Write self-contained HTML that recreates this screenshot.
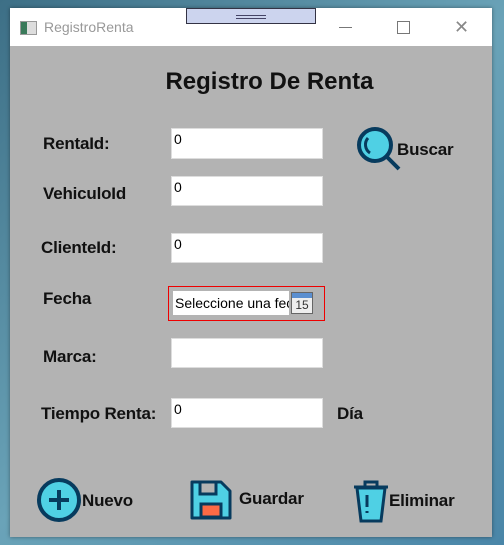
<!DOCTYPE html>
<html><head><style>
body{margin:0;width:504px;height:545px;overflow:hidden;background:linear-gradient(135deg,#3d6f86,#6aa3b8 50%,#4a86a8);font-family:"Liberation Sans",sans-serif;position:relative}
.win{position:absolute;left:10px;top:8px;width:482px;height:529px;background:#b3b3b3;box-shadow:0 0 4px rgba(0,0,0,.4)}
.tb{position:absolute;left:0;top:0;width:482px;height:38px;background:#fff}
.a{position:absolute}
.lbl{position:absolute;font-weight:bold;font-size:17px;color:#111;letter-spacing:-0.2px}
.tx{position:absolute;left:161px;width:152px;background:#fff;border:1px solid #ddd;font-size:14px;padding:2px 2px;box-sizing:border-box}
</style></head><body>
<div class="win">
<div class="tb">
<div class="a" style="left:10px;top:13px;width:15px;height:12px;border:1px solid #999;background:linear-gradient(90deg,#3a7a5a 40%,#ddd 40%)"></div>
<div class="a" style="left:34px;top:11px;font-size:14px;color:#999">RegistroRenta</div>
<div class="a" style="left:176px;top:0;width:128px;height:14px;background:#ccd4ee;border:1px solid #334"><div class="a" style="left:49px;top:6px;width:30px;height:2px;border-top:1px solid #446;border-bottom:1px solid #446"></div></div>
<div class="a" style="left:329px;top:19px;width:13px;height:1px;background:#777"></div>
<div class="a" style="left:387px;top:13px;width:11px;height:11px;border:1px solid #777"></div>
<div class="a" style="left:444px;top:9px;font-size:18px;color:#888">✕</div>
</div>
<div class="a" style="left:0;width:482px;top:60px;text-align:center;font-size:24px;font-weight:bold;color:#111;padding-left:37px;box-sizing:border-box">Registro De Renta</div>
<div class="lbl" style="left:33px;top:126px">RentaId:</div>
<div class="lbl" style="left:33px;top:176px">VehiculoId</div>
<div class="lbl" style="left:31px;top:230px">ClienteId:</div>
<div class="lbl" style="left:33px;top:281px">Fecha</div>
<div class="lbl" style="left:33px;top:339px">Marca:</div>
<div class="lbl" style="left:31px;top:396px">Tiempo Renta:</div>
<div class="lbl" style="left:327px;top:396px">Día</div>
<div class="tx" style="top:120px;height:31px">0</div>
<div class="tx" style="top:168px;height:30px">0</div>
<div class="tx" style="top:225px;height:30px">0</div>
<div class="tx" style="top:330px;height:30px"></div>
<div class="tx" style="top:390px;height:30px">0</div>
<div class="a" style="left:158px;top:278px;width:157px;height:35px;border:1px solid #e00;box-sizing:border-box">
<div class="a" style="left:4px;top:4px;width:114px;height:24px;background:#fff;font-size:14px;line-height:24px;overflow:hidden;white-space:nowrap;padding-left:2px">Seleccione una fecha</div>
<div class="a" style="left:122px;top:5px;width:22px;height:22px;background:linear-gradient(#5b8fd0 0 5px,#eee 5px);border:1px solid #666;box-sizing:border-box;font-size:12px;text-align:center;line-height:24px;color:#333">15</div>
</div>
<svg class="a" style="left:346px;top:118px" width="46" height="46" viewBox="0 0 46 46"><circle cx="19" cy="19" r="16" fill="#4fd0e4" stroke="#073b5e" stroke-width="4"/><path d="M30 30 L43 43" stroke="#073b5e" stroke-width="4"/><path d="M12 12 A10 10 0 0 0 14 27" fill="none" stroke="#073b5e" stroke-width="3"/></svg>
<div class="lbl" style="left:387px;top:132px">Buscar</div>
<svg class="a" style="left:26px;top:469px" width="48" height="46" viewBox="0 0 48 46"><circle cx="23" cy="23" r="20" fill="#4fd0e4" stroke="#073b5e" stroke-width="4"/><path d="M23 13V33M13 23H33" stroke="#073b5e" stroke-width="4"/></svg>
<div class="lbl" style="left:72px;top:483px">Nuevo</div>
<svg class="a" style="left:179px;top:470px" width="44" height="44" viewBox="0 0 44 44"><path d="M3 4H32L41 13V40H3Z" fill="#4fd0e4" stroke="#073b5e" stroke-width="3" stroke-linejoin="round"/><rect x="11" y="4" width="16" height="12" fill="#b3b3b3" stroke="#073b5e" stroke-width="3"/><rect x="12" y="26" width="20" height="13" fill="#fc6a45" stroke="#073b5e" stroke-width="3"/></svg>
<div class="lbl" style="left:229px;top:481px">Guardar</div>
<svg class="a" style="left:341px;top:471px" width="40" height="46" viewBox="0 0 40 46"><path d="M3 8H37" stroke="#073b5e" stroke-width="3"/><path d="M14 8V3H26V8" fill="none" stroke="#073b5e" stroke-width="3"/><path d="M6 9L10 42H30L34 9Z" fill="#4fd0e4" stroke="#073b5e" stroke-width="3"/><path d="M16 16V28M16 32V34" stroke="#073b5e" stroke-width="3"/></svg>
<div class="lbl" style="left:379px;top:483px">Eliminar</div>
</div>
</body></html>
